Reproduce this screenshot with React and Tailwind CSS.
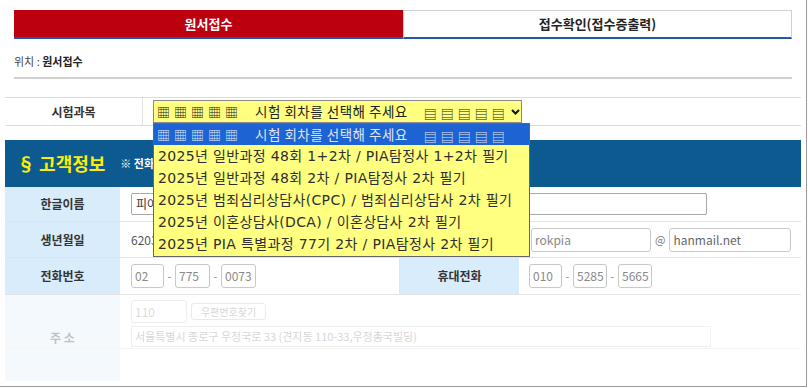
import React from "react";

const kr = "font-['Noto_Sans_CJK_KR',sans-serif]";
const opt = "font-['DejaVu_Sans','Noto_Sans_CJK_KR',sans-serif]";

const options = [
  "2025년 일반과정 48회 1+2차 / PIA탐정사 1+2차 필기",
  "2025년 일반과정 48회 2차 / PIA탐정사 2차 필기",
  "2025년 범죄심리상담사(CPC) / 범죄심리상담사 2차 필기",
  "2025년 이혼상담사(DCA) / 이혼상담사 2차 필기",
  "2025년 PIA 특별과정 77기 2차 / PIA탐정사 2차 필기",
];

function Marks({ ch }) {
  return (
    <span className={`inline-flex gap-[4px] text-[13px] leading-none ${kr}`}>
      {[0, 1, 2, 3, 4].map((i) => (
        <span key={i}>{ch}</span>
      ))}
    </span>
  );
}

function Placeholder({ light }) {
  return (
    <div className={`flex items-center pl-[3px] ${light ? "text-[#dfe6f3]" : "text-[#222]"}`}>
      <Marks ch="▦" />
      <span className={`ml-[17px] text-[13.5px] tracking-[0.5px] ${kr}`}>시험 회차를 선택해 주세요</span>
      <span className="ml-[16px]">
        <Marks ch="▤" />
      </span>
    </div>
  );
}

function Label({ children, w = "w-[115px]" }) {
  return (
    <div className={`${w} shrink-0 bg-[#d9ecfb] flex items-center justify-center text-[12px] font-bold text-[#333]`}>
      {children}
    </div>
  );
}

function Box({ w, children, h = "h-[24px]" }) {
  return (
    <div className={`${w} ${h} border border-[#c8c8c8] rounded-[3px] bg-white flex items-center pl-[3px] text-[12px] text-[#888]`}>
      {children}
    </div>
  );
}

function Dash() {
  return <span className="w-[11px] text-center text-[11px] text-[#888]">-</span>;
}

export default function App() {
  return (
    <div className={`relative w-[807px] h-[387px] bg-white border-r border-b border-[#9a9a9a] overflow-hidden ${kr}`}>
      {/* tabs */}
      <div className="flex pt-[10px] px-[14px]">
        <div className="w-[390px] h-[29px] bg-[#bc0010] border-b-2 border-[#1f5aa6] flex items-center justify-center text-white text-[13px] font-bold">
          원서접수
        </div>
        <div className="w-[390px] h-[29px] border border-[#d0d0d0] border-b-2 border-b-[#1f5aa6] flex items-center justify-center text-[#222] text-[13px] font-bold">
          접수확인(접수증출력)
        </div>
      </div>

      <div className="mx-[14px] pt-[15px] pb-[8px] border-b-2 border-[#d0d0d0] text-[11px] leading-[15px] text-[#444]">
        위치 : <span className="font-bold text-[#222]">원서접수</span>
      </div>

      {/* exam select */}
      <div className="mx-[5px] mt-[18px] h-[29px] flex border-t border-b border-[#dcdcdc]">
        <div className="w-[138px] border-r border-[#e2e2e2] flex items-center justify-center text-[12px] font-bold text-[#333]">
          시험과목
        </div>
        <div className="pl-[10px] flex items-center">
          <div className="w-[369px] h-[23px] bg-[#ffff80] border border-[#8a8a8a] flex items-center">
            <Placeholder />
            <svg width="9" height="6" viewBox="0 0 9 6" className="ml-[6px]">
              <path d="M1 1 L4.5 4.5 L8 1" stroke="#111" strokeWidth="2" fill="none" />
            </svg>
          </div>
        </div>
      </div>

      {/* customer info */}
      <div className="mx-[5px] mt-[14px]">
        <div className="h-[47px] bg-[#0c5a8f] flex items-center pl-[12px]">
          <span className="text-[#ffee00] text-[18px] font-bold">§ 고객정보</span>
          <span className="ml-[15px] text-white text-[11px] font-bold">※ 전화번호는 연락 가능한 번호로 입력해 주세요.</span>
        </div>

        <div className="flex h-[35px] border-b border-[#e3e3e3]">
          <Label>한글이름</Label>
          <div className="pl-[11px] flex items-center">
            <div className="w-[576px] h-[22px] border border-[#a9a9a9] rounded-[2px] flex items-center pl-[4px] text-[12px] text-[#333]">
              피아
            </div>
          </div>
        </div>

        <div className="flex h-[36px] border-b border-[#e3e3e3]">
          <Label>생년월일</Label>
          <div className="w-[280px] pl-[11px] flex items-center text-[12px] text-[#555]">620315</div>
          <Label w="w-[120px]">이메일</Label>
          <div className="pl-[11px] flex items-center">
            <Box w="w-[120px]">rokpia</Box>
            <span className="mx-[4px] text-[11px] text-[#777]">@</span>
            <Box w="w-[122px]">
              <span className="text-[#666]">hanmail.net</span>
            </Box>
          </div>
        </div>

        <div className="flex h-[37px] border-b border-[#e3e3e3]">
          <Label>전화번호</Label>
          <div className="w-[280px] pl-[11px] flex items-center border-r border-[#e6e6e6]">
            <Box w="w-[33px]">02</Box>
            <Dash />
            <Box w="w-[35px]">775</Box>
            <Dash />
            <Box w="w-[35px]">0073</Box>
          </div>
          <Label w="w-[119px]">휴대전화</Label>
          <div className="pl-[10px] flex items-center">
            <Box w="w-[33px]">010</Box>
            <Dash />
            <Box w="w-[34px]">5285</Box>
            <Dash />
            <Box w="w-[34px]">5665</Box>
          </div>
        </div>

        <div className="flex h-[86px] opacity-30">
          <Label>주 소</Label>
          <div className="flex-1 flex flex-col pl-[11px] pt-[5px]">
            <div className="flex items-center">
              <Box w="w-[56px]" h="h-[23px]">110</Box>
              <div className="ml-[4px] w-[75px] h-[17px] border border-[#bbb] rounded-[3px] flex items-center justify-center text-[10px] text-[#777]">
                우편번호찾기
              </div>
            </div>
            <div className="mt-[3px] w-[580px] h-[21px] border border-[#ccc] flex items-center pl-[3px] text-[11px] text-[#777]">
              서울특별시 종로구 우정국로 33 (견지동 110-33,우정총국빌딩)
            </div>
            <div className="mt-[1px] -ml-[126px] border-b border-[#ddd]" />
          </div>
        </div>
      </div>

      {/* open dropdown list */}
      <div className="absolute left-[153px] top-[123px] w-[377px] h-[134px] bg-[#ffff80] border border-[#666]">
        <div className="h-[21px] bg-[#1d63d3] flex items-center">
          <Placeholder light />
        </div>
        {options.map((o) => (
          <div key={o} className={`h-[22px] flex items-center pl-[4px] text-[14px] tracking-[0.35px] text-[#2e2e2e] whitespace-nowrap ${opt}`}>
            {o}
          </div>
        ))}
      </div>
    </div>
  );
}
